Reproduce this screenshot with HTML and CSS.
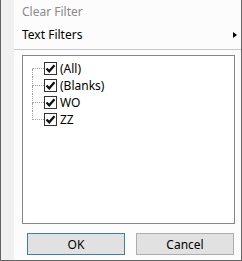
FILE: index.html
```html
<!DOCTYPE html>
<html lang="en">
<head>
    <meta charset="UTF-8">
    <title>Filter Menu</title>
    <link rel="stylesheet" href="styles.css">
</head>
<body>
    <div class="menu">
        <div class="menu-item disabled">Clear Filter</div>
        <div class="menu-item">
            <span>Text Filters</span>
            <span class="submenu-arrow"></span>
        </div>
        <div class="separator"></div>

        <div class="listbox">
            <div class="tree-row first">
                <div class="branch"><div class="branch-top"></div><div class="branch-bottom"></div></div>
                <span class="checkbox"><svg width="13" height="13" viewBox="0 0 13 13"><rect x="0.5" y="0.5" width="12" height="12" fill="#fff" stroke="#333"/><path d="M2.5 6.5 L5.2 9.3 L10.5 3.2" fill="none" stroke="#111" stroke-width="2.3"/></svg></span>
                <span class="label">(All)</span>
            </div>
            <div class="tree-row">
                <div class="branch"><div class="branch-top"></div><div class="branch-bottom"></div></div>
                <span class="checkbox"><svg width="13" height="13" viewBox="0 0 13 13"><rect x="0.5" y="0.5" width="12" height="12" fill="#fff" stroke="#333"/><path d="M2.5 6.5 L5.2 9.3 L10.5 3.2" fill="none" stroke="#111" stroke-width="2.3"/></svg></span>
                <span class="label">(Blanks)</span>
            </div>
            <div class="tree-row">
                <div class="branch"><div class="branch-top"></div><div class="branch-bottom"></div></div>
                <span class="checkbox"><svg width="13" height="13" viewBox="0 0 13 13"><rect x="0.5" y="0.5" width="12" height="12" fill="#fff" stroke="#333"/><path d="M2.5 6.5 L5.2 9.3 L10.5 3.2" fill="none" stroke="#111" stroke-width="2.3"/></svg></span>
                <span class="label">WO</span>
            </div>
            <div class="tree-row last">
                <div class="branch"><div class="branch-top"></div><div class="branch-bottom"></div></div>
                <span class="checkbox"><svg width="13" height="13" viewBox="0 0 13 13"><rect x="0.5" y="0.5" width="12" height="12" fill="#fff" stroke="#333"/><path d="M2.5 6.5 L5.2 9.3 L10.5 3.2" fill="none" stroke="#111" stroke-width="2.3"/></svg></span>
                <span class="label">ZZ</span>
            </div>
        </div>

        <div class="buttons">
            <button class="btn default">OK</button>
            <button class="btn">Cancel</button>
        </div>
    </div>
</body>
</html>
```

FILE: styles.css
```css
body {
    margin: 0;
    padding: 0;
    font-family: "Noto Sans", "Open Sans", sans-serif;
    font-size: 12px;
    color: #000;
}

.menu {
    width: 242px;
    height: 261px;
    box-sizing: border-box;
    border: 1px solid #646464;
    border-top: none;
    padding-left: 13px;
    background: linear-gradient(to right, #f0f0f0 0, #f0f0f0 13px, #fcfcfc 13px);
}

.menu-item {
    height: 23px;
    line-height: 23px;
    padding-left: 8px;
    padding-right: 4px;
    display: flex;
    justify-content: space-between;
    align-items: center;
}

.menu-item.disabled {
    color: #8a8a8a;
}

.submenu-arrow {
    width: 0;
    height: 0;
    border-left: 4px solid #000;
    border-top: 3.5px solid transparent;
    border-bottom: 3.5px solid transparent;
}

.separator {
    height: 1px;
    margin-top: 3px;
    background-color: #c8c8c8;
}

.listbox {
    margin: 5px 0 0 8px;
    width: 213px;
    height: 169px;
    box-sizing: border-box;
    border: 1px solid #828790;
    background-color: #fff;
    padding: 4px 0 0 9px;
}

.tree-row {
    display: flex;
    align-items: center;
    height: 17px;
}

.branch {
    width: 12px;
    height: 17px;
    display: flex;
    flex-direction: column;
}

.branch-top {
    height: 8px;
    border-left: 1px dotted #a0a0a0;
    border-bottom: 1px dotted #a0a0a0;
}

.branch-bottom {
    flex: 1;
    border-left: 1px dotted #a0a0a0;
}

.tree-row.first .branch-top {
    border-left-color: transparent;
}

.tree-row.last .branch-bottom {
    border-left-color: transparent;
}

.checkbox {
    width: 13px;
    height: 13px;
    display: flex;
}

.label {
    margin-left: 3px;
    line-height: 17px;
}

.buttons {
    display: flex;
    gap: 11px;
    margin: 9px 0 0 13px;
}

.btn {
    width: 98px;
    height: 22px;
    box-sizing: border-box;
    border: 1px solid #adadad;
    background-color: #e1e1e1;
    font-family: "Noto Sans", "Open Sans", sans-serif;
    font-size: 12px;
    color: #000;
    padding: 0;
}

.btn.default {
    border-color: #3c7fb1;
}
```
